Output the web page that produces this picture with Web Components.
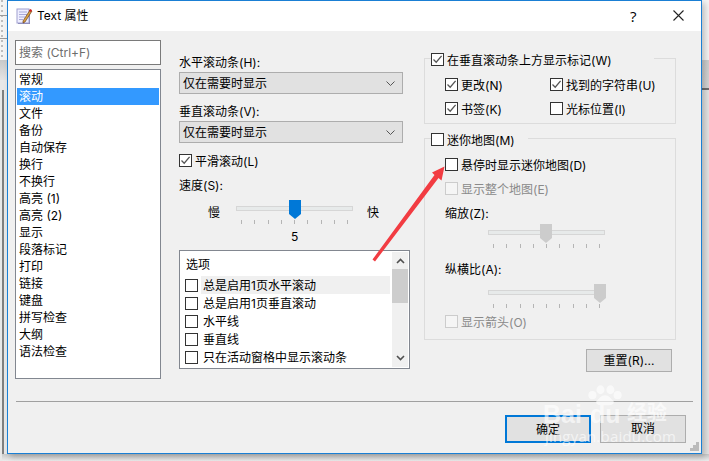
<!DOCTYPE html>
<html><head><meta charset="utf-8">
<style>
html,body{margin:0;padding:0;width:709px;height:461px;overflow:hidden;background:#f0f0f0;
font:12px/16px "Inter","Noto Sans CJK SC",sans-serif;color:#000}
</style></head><body>
<x-desktop>
<x-dialog>
  <x-pane slot="left" style="width:146px;height:25px;margin-bottom:4px;padding:4px 3px;color:#6d6d6d">搜索 (Ctrl+F)</x-pane>
  <x-list slot="left" selected="1" items="常规|滚动|文件|备份|自动保存|换行|不换行|高亮 (1)|高亮 (2)|显示|段落标记|打印|链接|键盘|拼写检查|大纲|语法检查"></x-list>

  <x-label slot="mid">水平滚动条(H):</x-label>
  <x-combo slot="mid">仅在需要时显示</x-combo>
  <x-label slot="mid" style="margin-top:9px">垂直滚动条(V):</x-label>
  <x-combo slot="mid">仅在需要时显示</x-combo>
  <x-check slot="mid" checked style="margin-top:11px">平滑滚动(L)</x-check>
  <x-label slot="mid" style="margin-top:10px;height:21px">速度(S):</x-label>
  <x-slider slot="mid" value="5" low="慢" high="快" pos="59" color="#0078d7" style="margin-left:57px"></x-slider>
  <x-options slot="mid" items="总是启用1页水平滚动|总是启用1页垂直滚动|水平线|垂直线|只在活动窗格中显示滚动条"></x-options>

  <x-group slot="right" style="height:66px;--gap:42px">
    <x-check slot="legend" checked>在垂直滚动条上方显示标记(W)</x-check>
    <div style="display:grid;grid-template-columns:105px auto;row-gap:11px;padding:19px 0 0 20px;">
      <x-check checked>更改(N)</x-check><x-check checked>找到的字符串(U)</x-check>
      <x-check checked>书签(K)</x-check><x-check>光标位置(I)</x-check>
    </div>
  </x-group>
  <x-group slot="right" style="height:202px;margin-top:14px;--gap:13px">
    <x-check slot="legend">迷你地图(M)</x-check>
    <div style="display:flex;flex-direction:column;padding:19px 0 0 20px;">
      <x-check>悬停时显示迷你地图(D)</x-check>
      <x-check disabled style="margin-top:11px">显示整个地图(E)</x-check>
      <x-label style="margin-top:10px;height:17px">缩放(Z):</x-label>
      <x-slider pos="58" color="#cccccc" style="margin-left:43px"></x-slider>
      <x-label style="margin-top:13px;height:21px">纵横比(A):</x-label>
      <x-slider pos="112" color="#cccccc" style="margin-left:43px"></x-slider>
      <x-check disabled style="margin-top:7px">显示箭头(O)</x-check>
    </div>
  </x-group>
  <x-button slot="right" style="margin:9px 0 0 162px;height:23px;--lh:22px">重置(R)...</x-button>

  <x-button slot="foot" primary>确定</x-button>
  <x-button slot="foot">取消</x-button>
</x-dialog>
<x-watermark></x-watermark>
<x-arrow></x-arrow>
</x-desktop>

<script>
function def(name, render){
  customElements.define(name, class extends HTMLElement{
    constructor(){super();this.attachShadow({mode:'open'});}
    connectedCallback(){this.shadowRoot.innerHTML=render(this);}
  });
}
const CHK='<svg width="13" height="13" viewBox="0 0 13 13" style="display:block"><path d="M2.500 6.500 5.200 9.200 10.600 2.800" fill="none" stroke="#555" stroke-width="1.300"/></svg>';

def('x-desktop',()=>`<style>
:host{display:block;position:relative;width:709px;height:461px;overflow:hidden;background:#e6e6e6}
.l{position:absolute;left:0;top:0;width:7px;height:461px;background:
 linear-gradient(#f4f4f4 60px,#c9c9c9 60px,#e4e4e4 80px,#e8e8e8 80px)}
.dots{position:absolute;left:1px;top:0;width:2px;height:60px;background:repeating-linear-gradient(#bdbdbd 0 2px,#f4f4f4 2px 5px)}
.rule{position:absolute;left:0;width:7px;height:1px;background:#9a9a9a}
.v{position:absolute;left:2px;top:90px;width:2px;height:371px;background:#7f7f7f}
.r{position:absolute;right:0;top:0;width:7px;height:461px;background:linear-gradient(#f4f4f4 60px,#cfcfcf 60px,#d4d4d4 88px,#6f6f6f 88px,#6f6f6f 90px,#e4e4e4 90px)}
.b{position:absolute;left:2px;bottom:0;width:707px;height:7px;background:linear-gradient(#c8c8c8,#ececec)}
</style><div class="l"></div><div class="dots"></div><div class="rule" style="top:15px"></div><div class="rule" style="top:38px"></div><div class="v"></div><div class="r"></div><div class="b"></div><slot></slot>`);

def('x-dialog',()=>`<style>
:host{display:flex;flex-direction:column;position:absolute;left:7px;top:0;width:695px;height:454px;box-sizing:border-box;
border:1px solid #1a7fd4;background:#f0f0f0;box-shadow:3px 3px 6px rgba(0,0,0,.22);z-index:1}
.title{height:30px;background:#fff;display:flex;align-items:center;flex:none;font-size:12px;position:relative}
.title svg.ic{margin-left:8px;margin-right:4px}
.q{position:absolute;left:622px;top:6px;font:15px/18px "Open Sans",sans-serif}
.x{position:absolute;left:665px;top:9px}
.body{flex:none;display:flex;height:348px;padding:9px 0 0 7px;box-sizing:border-box}
.c{display:flex;flex-direction:column;flex:none}
.left{width:146px;margin-right:18px}
.mid{width:231px;margin-right:14px;margin-top:14px}
.right{width:252px;margin-top:18px}
.sep{flex:none;height:1px;background:#a0a0a0;margin:22px 8px 0 8px}
.foot{flex:none;display:flex;gap:9px;justify-content:flex-end;padding:13px 15px 0 0}
.grip{position:absolute;right:2px;bottom:2px;width:9px;height:9px;background:
 linear-gradient(#bbb,#bbb) 6px 0/3px 3px no-repeat,linear-gradient(#bbb,#bbb) 3px 3px/3px 3px no-repeat,
 linear-gradient(#bbb,#bbb) 6px 3px/3px 3px no-repeat,linear-gradient(#bbb,#bbb) 0 6px/3px 3px no-repeat,
 linear-gradient(#bbb,#bbb) 3px 6px/3px 3px no-repeat,linear-gradient(#bbb,#bbb) 6px 6px/3px 3px no-repeat}
</style>
<div class="title">
<svg class="ic" width="17" height="18" viewBox="0 0 17 18"><rect x="2" y="3" width="12" height="14" fill="#7f7fa8"/><rect x="1" y="2" width="12" height="14" fill="#eeeeff" stroke="#a0a0d0"/><path d="M3 5h8M3 7.500h8M3 10h6M3 12.500h4" stroke="#a9a9d8"/><path d="M7 14 14 3l2 1-7 11-2 1z" fill="#d8a040" stroke="#5a3010" stroke-width=".6"/><path d="M13 4l1-2 2 1-1 2z" fill="#d02020"/></svg>
<span>Text 属性</span><div class="q">?</div>
<svg class="x" width="11" height="11" viewBox="0 0 11 11"><path d="M.5.500 10.500 10.500M10.500.5.500 10.500" stroke="#222" stroke-width="1.100" fill="none"/></svg>
</div>
<div class="body">
<div class="c left"><slot name="left"></slot></div>
<div class="c mid"><slot name="mid"></slot></div>
<div class="c right"><slot name="right"></slot></div>
</div>
<div class="sep"></div>
<div class="foot"><slot name="foot"></slot></div>
<div class="grip"></div>`);

def('x-pane',()=>`<style>:host{display:block;box-sizing:border-box;border:1px solid #7a7a7a;background:#fff;white-space:nowrap}</style><slot></slot>`);

def('x-list',h=>{const s=+h.getAttribute('selected');return `<style>
:host{display:block;box-sizing:border-box;width:146px;height:310px;border:1px solid #828790;background:#fff;padding:1px}
div{height:17px;line-height:18px;padding-left:2px;white-space:nowrap}
.s{background:#3399ff;color:#fff}
</style>`+h.getAttribute('items').split('|').map((t,i)=>`<div class="${i==s?'s':''}">${t}</div>`).join('')});

def('x-label',()=>`<style>:host{display:block;height:16px;line-height:17px;white-space:nowrap;margin-bottom:2px}</style><slot></slot>`);

def('x-combo',()=>`<style>
:host{display:block;line-height:22px;box-sizing:border-box;width:224px;height:22px;border:1px solid #adadad;background:#e1e1e1;padding-left:3px;position:relative}
svg{position:absolute;right:7px;top:8px}
</style><slot></slot><svg width="9" height="5" viewBox="0 0 9 5"><path d="M.5.500 4.500 4.500 8.500.5" fill="none" stroke="#555"/></svg>`);

def('x-check',h=>{const on=h.hasAttribute('checked'),dis=h.hasAttribute('disabled');return `<style>
:host{display:flex;align-items:center;gap:3px;height:13px;white-space:nowrap;${dis?'color:#8a8a8a;':''}}
.b{box-sizing:border-box;width:13px;height:13px;flex:none;border:1px solid ${dis?'#ccc':'#333'};background:${dis?'#f5f5f5':'#fff'}}
.b svg{margin:-1px}
span{margin-top:2px}
</style><div class="b">${on?CHK:''}</div><span><slot></slot></span>`});

def('x-slider',h=>{
 const pos=+h.getAttribute('pos'),col=h.getAttribute('color'),low=h.getAttribute('low'),hi=h.getAttribute('high'),v=h.getAttribute('value');
 let ticks='';for(let i=0;i<9;i++)ticks+=`<i style="left:${5+i*13.25}px"></i>`;
 return `<style>
:host{display:block;position:relative;width:117px;height:${v?'50':'24'}px}
.t{position:absolute;left:0;top:6px;height:3px;background:#e7eaea;border:1px solid #d6d6d6;width:115px}
.th{position:absolute;left:${pos-6}px;top:0;width:12px;height:19px}
i{position:absolute;top:20px;width:1px;height:4px;background:#b5b5b5}
span{position:absolute;top:0}
.lo{left:-28px;top:5px}.hi{left:131px;top:5px}
.v{left:55px;top:29px}
</style><div class="t"></div>
<svg class="th" viewBox="0 0 12 19"><path d="M0 0H12V14L6 19 0 14Z" fill="${col}"/></svg>${ticks}
${low?`<span class="lo">${low}</span><span class="hi">${hi}</span><span class="v">${v}</span>`:''}`});

def('x-options',h=>`<style>
:host{display:block;box-sizing:border-box;width:231px;height:119px;border:1px solid #828790;background:#fff;position:relative;overflow:hidden}
.h{height:25px;line-height:27px;padding-left:6px}
.r{display:flex;align-items:center;height:18px;padding-left:5px;white-space:nowrap}
.b{box-sizing:border-box;width:13px;height:13px;border:1px solid #333;margin-right:3px;flex:none}
.t{flex:1;height:18px;line-height:20px;padding-left:2px}
.hov{background:#f0f0f0}
.sb{position:absolute;left:212px;top:1px;bottom:1px;width:16px;background:#f0f0f0}
.th{position:absolute;left:0;top:17px;width:16px;height:34px;background:#cdcdcd}
svg{position:absolute;left:4px}
.rows{margin-right:19px}
</style>
<div class="rows"><div class="h">选项</div>
${h.getAttribute('items').split('|').map((t,i)=>`<div class="r"><div class="b"></div><div class="t ${i==0?'hov':''}">${t}</div></div>`).join('')}</div>
<div class="sb"><svg style="top:6px" width="9" height="6" viewBox="0 0 9 6"><path d="M1 5 4.500 1.500 8 5" fill="none" stroke="#505050" stroke-width="1.600"/></svg>
<div class="th"></div><svg style="bottom:6px" width="9" height="6" viewBox="0 0 9 6"><path d="M1 1 4.500 4.500 8 1" fill="none" stroke="#505050" stroke-width="1.600"/></svg></div>`);

def('x-group',()=>`<style>
:host{display:block;box-sizing:border-box;width:252px;border:1px solid #dcdcdc;position:relative}
.lg{position:absolute;left:6px;top:-6px;background:#f0f0f0;padding-right:var(--gap,0);height:13px}
</style><div class="lg"><slot name="legend"></slot></div><slot></slot>`);

def('x-button',h=>{const p=h.hasAttribute('primary');return `<style>
:host{display:block;text-align:center;box-sizing:border-box;width:86px;height:28px;background:#e1e1e1;
line-height:var(--lh,26px);
border:${p?'2px solid #0078d7':'1px solid #adadad'};white-space:nowrap}
</style><slot></slot>`});

def('x-watermark',()=>`<style>
:host{display:block;position:absolute;left:540px;top:384px;width:169px;height:70px;z-index:3;pointer-events:none;color:#fff;opacity:.62}
.b{position:absolute;left:3px;top:15px;font:bold 25px/30px "Liberation Sans",sans-serif}
.d{position:absolute;left:50px;top:15px;font:bold 25px/30px "Liberation Sans",sans-serif}
.z{position:absolute;left:87px;top:16px;font:bold 20px/24px "Noto Sans CJK SC",sans-serif}
.u{position:absolute;left:5px;top:43px;font:15px/18px "Open Sans",sans-serif;letter-spacing:.2px;white-space:nowrap}
svg{position:absolute;left:47px;top:1px}
</style>
<svg width="36" height="23" viewBox="0 0 40 34" preserveAspectRatio="none" fill="#fff"><ellipse cx="6" cy="15" rx="4.500" ry="6"/><ellipse cx="15" cy="7" rx="4.500" ry="6.500"/><ellipse cx="26" cy="7" rx="4.500" ry="6.500"/><ellipse cx="34" cy="15" rx="4.500" ry="6"/><path d="M20 15c5 0 6 5 9 8 2 3 0 7-4 7h-10c-4 0-6-4-4-7 3-3 4-8 9-8z"/></svg>
<div class="b">Bai</div><div class="d">du</div><div class="z">经验</div><div class="u">jingyan.baidu.com</div>`);

def('x-arrow',()=>`<style>:host{display:block;position:absolute;left:370px;top:160px;width:80px;height:105px;z-index:2;pointer-events:none}</style>
<svg width="80" height="105" viewBox="0 0 80 105"><path d="M2.500 99.500 64.500 15 62 12.500 74.500 6.500 71.500 20.500 68.500 18 5 101.500Z" fill="#f23c42"/></svg>`);
</script>
</body></html>
